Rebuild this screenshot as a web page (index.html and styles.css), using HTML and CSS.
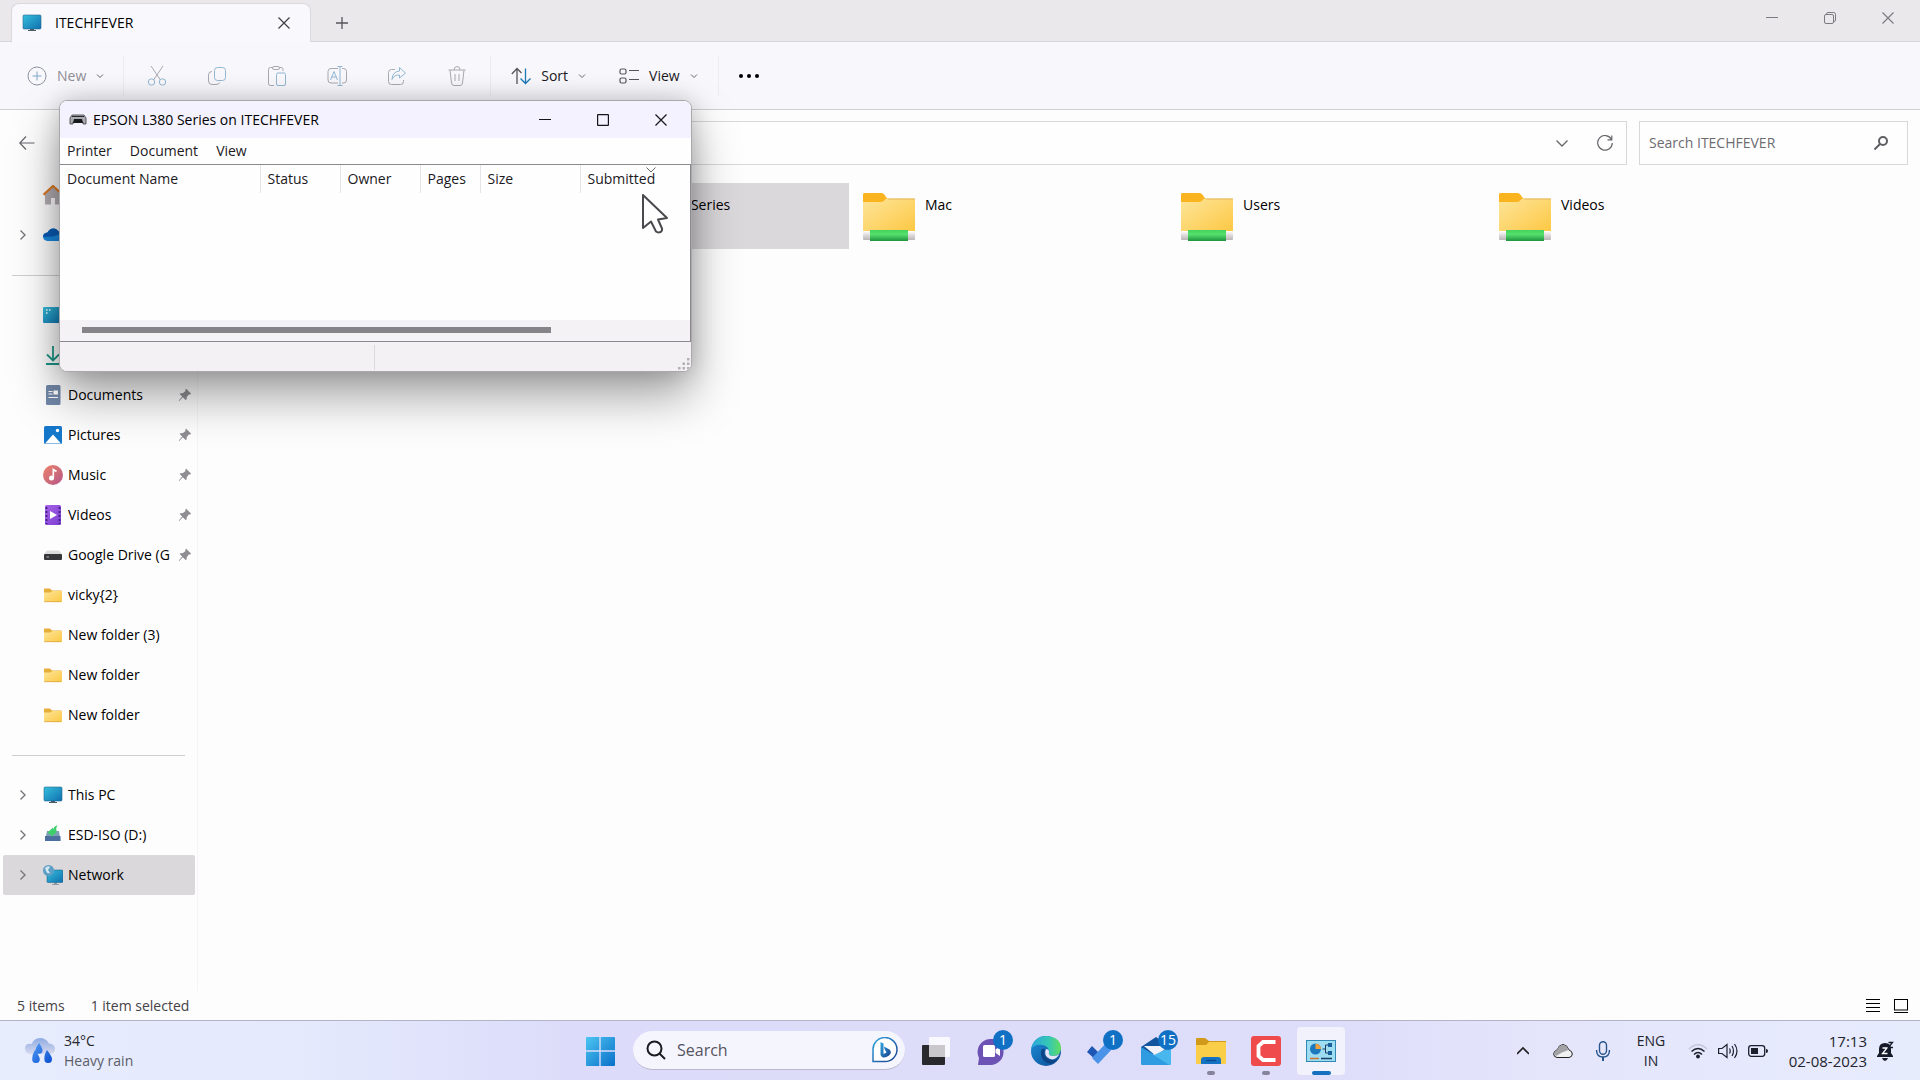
FILE: index.html
```html
<!DOCTYPE html>
<html lang="en">
<head>
<meta charset="utf-8">
<meta name="viewport" content="width=device-width, initial-scale=1">
<title>ITECHFEVER</title>
<link rel="stylesheet" href="styles.css">
</head>
<body>
<svg class="defs" aria-hidden="true">
  <defs>
    <linearGradient id="g-screen" x1="0" y1="0" x2="1" y2="1"><stop offset="0" stop-color="#35c0dd"/><stop offset="1" stop-color="#0f6fae"/></linearGradient>
    <linearGradient id="g-folder" x1="0" y1="0" x2="1" y2="1"><stop offset="0" stop-color="#fde59a"/><stop offset="1" stop-color="#fdc844"/></linearGradient>
    <linearGradient id="g-pipe" x1="0" y1="0" x2="0" y2="1"><stop offset="0" stop-color="#43d35c"/><stop offset=".4" stop-color="#55e06c"/><stop offset="1" stop-color="#1f9340"/></linearGradient>
    <linearGradient id="g-cap" x1="0" y1="0" x2="0" y2="1"><stop offset="0" stop-color="#f7f4f4"/><stop offset="1" stop-color="#b9b4b6"/></linearGradient>
    <linearGradient id="g-win" x1="0" y1="0" x2="1" y2="1"><stop offset="0" stop-color="#4cc5f2"/><stop offset="1" stop-color="#0a6fc8"/></linearGradient>
    <linearGradient id="g-music" x1="0" y1="0" x2="1" y2="1"><stop offset="0" stop-color="#ee8468"/><stop offset="1" stop-color="#b4568a"/></linearGradient>
    <linearGradient id="g-purple" x1="0" y1="0" x2="1" y2="1"><stop offset="0" stop-color="#a862e8"/><stop offset="1" stop-color="#7a3fd0"/></linearGradient>
    <linearGradient id="g-drop" x1="0" y1="0" x2="1" y2="1"><stop offset="0" stop-color="#4f9cf5"/><stop offset="1" stop-color="#0c4fd0"/></linearGradient>
    <linearGradient id="g-cloud" x1="0" y1="0" x2="0" y2="1"><stop offset="0" stop-color="#8fabe2"/><stop offset="1" stop-color="#d6d9ee"/></linearGradient>
    <linearGradient id="g-edge" x1="0" y1="0" x2="1" y2="0"><stop offset="0" stop-color="#2aa5dc"/><stop offset=".6" stop-color="#36c8b4"/><stop offset="1" stop-color="#62dd5c"/></linearGradient>
    <linearGradient id="g-edge2" x1="0" y1="0" x2="1" y2="1"><stop offset="0" stop-color="#1c8fd8"/><stop offset="1" stop-color="#0d4a94"/></linearGradient>
    <linearGradient id="g-bing" x1="0" y1="0" x2="1" y2="1"><stop offset="0" stop-color="#2fa6df"/><stop offset="1" stop-color="#1b3f8f"/></linearGradient>
    <symbol id="i-down" viewBox="0 0 8 8"><path d="M1 2.500 4 5.500 7 2.500" fill="none" stroke="currentColor" stroke-width="1"/></symbol>
    <symbol id="i-right" viewBox="0 0 8 12"><path d="M1.500 1.500 6 6 1.500 10.500" fill="none" stroke="currentColor" stroke-width="1.400"/></symbol>
    <symbol id="i-close" viewBox="0 0 12 12"><path d="M.5.5 11.500 11.500M11.500.5.5 11.500" fill="none" stroke="currentColor" stroke-width="1.200"/></symbol>
    <symbol id="i-min" viewBox="0 0 12 12"><path d="M0 5.500H12" stroke="currentColor"/></symbol>
    <symbol id="i-monitor" viewBox="0 0 20 20"><path d="M8 15h4v2h2v1H6v-1h2z" fill="#4b5b68"/><rect x="1" y="2" width="18" height="14" rx="1" fill="url(#g-screen)" stroke="#246a8f" stroke-width=".6"/></symbol>
    <symbol id="i-folder" viewBox="0 0 20 20"><path d="M1 4.500Q1 3.500 2 3.500H7L9 5.500H18Q19 5.500 19 6.500V10H1z" fill="#e6ae3a"/><path d="M1 7.500H7.500L9.500 6H19V16Q19 17 18 17H2Q1 17 1 16z" fill="url(#g-folder)"/><path d="M1.500 16.700H18.500" stroke="#d9a441" stroke-width=".8"/></symbol>
    <symbol id="i-pin" viewBox="0 0 14 14"><path d="M8.200.8 13.200 5.800 12 6.600 10.800 6.400 8.800 9 8.600 11.400 7.600 12 4.800 9.200 1.200 12.900.7 12.500 4.200 8.600 1.600 6 2.500 5.200 5 5 7.500 2.900 7.300 1.600z" fill="#8f8d91"/></symbol>
    <symbol id="i-netfolder" viewBox="0 0 54 50">
      <path d="M1 3Q1 1 3 1H19Q22 1 24 5L26 7H1z" fill="#fcb72b"/><path d="M1 3V12H19Q22 11 24 7Q22 1 19 1H3Q1 1 1 3" fill="#fab41f"/>
      <path d="M1 10H19Q21 10 23 8T27 6.500H52Q53 6.500 53 8V39H1z" fill="url(#g-folder)"/><path d="M26 7H53" stroke="#e3b860"/>
      <rect x="1" y="40" width="52" height="8" rx="1" fill="url(#g-cap)"/><rect x="8" y="38" width="38" height="11" fill="url(#g-pipe)"/>
    </symbol>
  </defs>
</svg>

<main class="explorer">
  <header class="titlebar">
    <div class="tab">
      <svg class="ico20"><use href="#i-monitor"/></svg>
      <span class="tab-name">ITECHFEVER</span>
      <button class="plain tab-close" aria-label="Close tab"><svg class="ico12"><use href="#i-close"/></svg></button>
    </div>
    <button class="plain tab-add" aria-label="New tab"><svg class="ico12" viewBox="0 0 12 12"><path d="M6 0V12M0 6H12" stroke="currentColor" stroke-width="1.300"/></svg></button>
    <div class="controls">
      <button class="plain" aria-label="Minimize"><svg class="ico12"><use href="#i-min"/></svg></button>
      <button class="plain" aria-label="Restore"><svg class="ico12" viewBox="0 0 12 12" fill="none" stroke="currentColor"><rect x=".5" y="2.500" width="9" height="9" rx="1.500"/><path d="M2.500 2.500V2Q2.500.5 4 .5H9.500Q11.500.5 11.500 2.500V8Q11.500 9.500 10 9.500"/></svg></button>
      <button class="plain" aria-label="Close"><svg class="ico12"><use href="#i-close"/></svg></button>
    </div>
  </header>

  <nav class="toolbar" aria-label="Commands">
    <button class="plain cmd faded"><svg class="ico20" viewBox="0 0 20 20" fill="none" stroke="#8b93a0"><circle cx="10" cy="10" r="9"/><path d="M10 5.500V14.500M5.500 10H14.500" stroke="#7fa6c6"/></svg><span>New</span><svg class="ico8"><use href="#i-down"/></svg></button>
    <i class="rule"></i>
    <div class="tools">
      <button class="plain" aria-label="Cut"><svg class="ico20" viewBox="0 0 20 20" fill="none"><path d="M4 0 13.500 14M16 0 6.500 14" stroke="#a8a8b0"/><circle cx="4.500" cy="16" r="3.200" stroke="#93b7d2"/><circle cx="15.500" cy="16" r="3.200" stroke="#93b7d2"/></svg></button>
      <button class="plain" aria-label="Copy"><svg class="ico20" viewBox="0 0 20 20" fill="none"><rect x="7.500" y="1.500" width="11" height="13" rx="3" stroke="#93b7d2"/><path d="M5 5.500Q1.500 5.500 1.500 9V15Q1.500 18.500 5 18.500H9Q12 18.500 12.500 16.500" stroke="#a8a8b0"/></svg></button>
      <button class="plain" aria-label="Paste"><svg class="ico20" viewBox="0 0 20 20" fill="none" stroke="#a8a8b0"><path d="M7 19.500H3.500Q1.500 19.500 1.500 17.500V3.500Q1.500 1.500 3.500 1.500H6M12 1.500H14Q16 1.500 16 3.500V5"/><rect x="5.500" y=".5" width="7" height="3" rx="1.500"/><rect x="9.500" y="7" width="9" height="12.500" rx="1.500" stroke="#93b7d2"/></svg></button>
      <button class="plain" aria-label="Rename"><svg class="ico20" viewBox="0 0 20 20" fill="none" stroke="#a8a8b0"><path d="M11 2.500H4Q1 2.500 1 5.500V14Q1 17 4 17H11M15 2.500H16.500Q19.500 2.500 19.500 5.500V14Q19.500 17 16.500 17H15"/><path d="M10.500.5H15.500M13 .5V19.500M10.500 19.500H15.500M3.500 14 7 5.500 10.500 14M4.700 11H9.300" stroke="#93b7d2"/></svg></button>
      <button class="plain" aria-label="Share"><svg class="ico20" viewBox="0 0 20 20" fill="none"><path d="M8 3.500H4.500Q1.500 3.500 1.500 6.500V15.500Q1.500 18.500 4.500 18.500H13.500Q16.500 18.500 16.500 15.500V14" stroke="#a8a8b0"/><path d="M12.500 1.500 18.500 7 12.500 12V9Q7.500 8.500 5 13.500Q5.500 5.500 12.500 5z" stroke="#93b7d2" stroke-linejoin="round"/></svg></button>
      <button class="plain" aria-label="Delete"><svg class="ico20" viewBox="0 0 20 20" fill="none" stroke="#a8a8b0"><path d="M1.500 4H18.500M7 4Q7 .5 10 .5T13 4M3 4 4.500 17Q4.800 19.500 7 19.500H13Q15.200 19.500 15.500 17L17 4M8 8V15M12 8V15"/></svg></button>
    </div>
    <i class="rule"></i>
    <button class="plain cmd"><svg class="ico20" viewBox="0 0 20 20" fill="none" stroke-width="1.300"><path d="M6 18V2.500M.8 8 6 2.500 10.500 7" stroke="#55565c"/><path d="M14.500 2.500V17.500M9.500 12.500 14.500 17.500 19.500 12.500" stroke="#1c78b8"/></svg><span>Sort</span><svg class="ico8"><use href="#i-down"/></svg></button>
    <button class="plain cmd view-cmd"><svg class="ico20" viewBox="0 0 20 20" fill="none" stroke="#55565c" stroke-width="1.200"><rect x="1" y="3" width="6" height="5" rx="1.500"/><rect x="1" y="12" width="6" height="5" rx="1.500"/><path d="M10 4.500H20M10 13.500H20"/></svg><span>View</span><svg class="ico8"><use href="#i-down"/></svg></button>
    <i class="rule rule-last"></i>
    <button class="plain more" aria-label="See more"><svg class="ico20" viewBox="0 0 20 20"><circle cx="2" cy="10" r="2"/><circle cx="10" cy="10" r="2"/><circle cx="18" cy="10" r="2"/></svg></button>
  </nav>

  <div class="location">
    <button class="plain back" aria-label="Back"><svg class="ico16" viewBox="0 0 16 16" fill="none" stroke="#66656a" stroke-width="1.200"><path d="M15.500 8H1M7 1.500.8 8 7 14.500"/></svg></button>
    <div class="address">
      <button class="plain" aria-label="Recent locations"><svg class="ico12" viewBox="0 0 12 12" fill="none" stroke="#66656a" stroke-width="1.300"><path d="M.5 3.500 6 9 11.500 3.500"/></svg></button>
      <button class="plain" aria-label="Refresh"><svg class="ico16" viewBox="0 0 16 16" fill="none" stroke="#66656a" stroke-width="1.200"><path d="M14.500 4.500A7.300 7.300 0 1 0 15.300 8M14.800.5V4.800H10.500"/></svg></button>
    </div>
    <label class="find">
      <input type="text" placeholder="Search ITECHFEVER" aria-label="Search ITECHFEVER">
      <svg class="ico16" viewBox="0 0 16 16" fill="none" stroke="#5f5e62"><circle cx="10" cy="6" r="4" stroke-width="2"/><path d="M7 9 1.500 14.500" stroke-width="2"/></svg>
    </label>
  </div>

  <div class="body">
    <aside class="sidebar">
      <a class="row" href="#" aria-label="Home"><i class="twist"></i><svg class="ico20" viewBox="0 0 20 20"><path d="M2 9V19.500H8V13H12V19.500H18V9L10 2z" fill="#b3aeb3"/><path d="M.5 9.800 10 1 19.500 9.800" fill="none" stroke="#dd7a22" stroke-width="2.200"/></svg></a>
      <a class="row" href="#" aria-label="OneDrive"><i class="twist"><svg><use href="#i-right"/></svg></i><svg class="ico20" viewBox="0 0 20 20"><path d="M4 16Q0 15 0 11.500T4.500 7.500Q7 3 11 3.500T17 9Q20 10 20 13T17 16z" fill="#1b8ae0"/><path d="M4.500 7.500Q7 3 11 3.500T17 9L10 11.500 0 12Q0 8 4.500 7.500" fill="#0b5cb5"/></svg></a>
      <hr>
      <a class="row" href="#" aria-label="Desktop"><i class="twist"></i><svg class="ico20" viewBox="0 0 20 20"><rect x="0" y="2" width="20" height="16" rx="1" fill="url(#g-screen)"/><path d="M3 5h1.500M3 8h1.500M6 5h1.500" stroke="#fff" stroke-width="1.500"/></svg></a>
      <a class="row" href="#" aria-label="Downloads"><i class="twist"></i><svg class="ico20" viewBox="0 0 20 20" fill="none" stroke="#1d9688" stroke-width="1.800"><path d="M10 1V15M4 9.500 10 15.500 16 9.500M3 19H17"/></svg></a>
      <a class="row" href="#"><i class="twist"></i><svg class="ico20" viewBox="0 0 20 20"><rect x="3" y="0" width="14.500" height="20" rx="1.500" fill="#7288a8"/><path d="M5.500 6.500h4M5.500 9h4M5.500 12.500h9.500" stroke="#fff"/><rect x="10.500" y="5.500" width="4.500" height="4" fill="#fff"/></svg><span>Documents</span><svg class="pin"><use href="#i-pin"/></svg></a>
      <a class="row" href="#"><i class="twist"></i><svg class="ico20" viewBox="0 0 20 20"><rect x="1" y="1" width="18" height="18" rx="1.500" fill="#1578cb"/><path d="M2 18.500 10 9.500 18 18.500z" fill="#fff"/><circle cx="14.500" cy="5.500" r="1.700" fill="#fff"/></svg><span>Pictures</span><svg class="pin"><use href="#i-pin"/></svg></a>
      <a class="row" href="#"><i class="twist"></i><svg class="ico20" viewBox="0 0 20 20"><circle cx="10" cy="10" r="10" fill="url(#g-music)"/><circle cx="8.500" cy="13" r="2.500" fill="#fff"/><path d="M10.300 13V4.500L13.500 6.500" fill="none" stroke="#fff" stroke-width="1.600"/></svg><span>Music</span><svg class="pin"><use href="#i-pin"/></svg></a>
      <a class="row" href="#"><i class="twist"></i><svg class="ico20" viewBox="0 0 20 20"><rect x="2" y="0" width="16" height="20" rx="1.500" fill="url(#g-purple)"/><path d="M3.500 2V19M16.500 2V19" stroke="#3f1d85" stroke-width="1.800" stroke-dasharray="2 2"/><path d="M7 6 14 10 7 14z" fill="#fff"/></svg><span>Videos</span><svg class="pin"><use href="#i-pin"/></svg></a>
      <a class="row" href="#"><i class="twist"></i><svg class="ico20" viewBox="0 0 20 20"><path d="M4 5.500H16L19 9H1z" fill="#dcdcdd"/><rect x="1" y="9" width="18" height="6" rx="1" fill="#36373a"/><path d="M3.500 12H6" stroke="#bbb"/></svg><span>Google Drive (G</span><svg class="pin"><use href="#i-pin"/></svg></a>
      <a class="row" href="#"><i class="twist"></i><svg class="ico20"><use href="#i-folder"/></svg><span>vicky{2}</span></a>
      <a class="row" href="#"><i class="twist"></i><svg class="ico20"><use href="#i-folder"/></svg><span>New folder (3)</span></a>
      <a class="row" href="#"><i class="twist"></i><svg class="ico20"><use href="#i-folder"/></svg><span>New folder</span></a>
      <a class="row" href="#"><i class="twist"></i><svg class="ico20"><use href="#i-folder"/></svg><span>New folder</span></a>
      <hr>
      <a class="row" href="#"><i class="twist"><svg><use href="#i-right"/></svg></i><svg class="ico20"><use href="#i-monitor"/></svg><span>This PC</span></a>
      <a class="row" href="#"><i class="twist"><svg><use href="#i-right"/></svg></i><svg class="ico20" viewBox="0 0 20 20"><path d="M4 6H16L17.500 16H2z" fill="#7f9fb4"/><path d="M2 11H17.500V16H2z" fill="#4d6fa0"/><path d="M4.500 7.500 10 2.500V5Q10.500 1.500 14.500 0 12.500 3 13.500 6 13.500 9 10 9.500V12z" fill="#3fce6c"/></svg><span>ESD-ISO (D:)</span></a>
      <a class="row selected" href="#"><i class="twist"><svg><use href="#i-right"/></svg></i><svg class="ico20" viewBox="0 0 20 20"><path d="M11 17h3v2h2v1H9v-1h2z" fill="#8f9ba4"/><rect x="4" y="5" width="16" height="12.500" rx="1" fill="url(#g-screen)" stroke="#246a8f" stroke-width=".6"/><circle cx="5.500" cy="5.500" r="5.500" fill="#5d9fc4"/><path d="M2 3Q5 0 7 2L5 5 7 8Q4 9 3 6z" fill="#d5e8f2"/></svg><span>Network</span></a>
    </aside>
    <section class="files">
      <a class="tile" href="#" aria-label="Shared folder"><svg><use href="#i-netfolder"/></svg></a>
      <a class="tile active" href="#"><svg viewBox="0 0 54 50"><rect x="6" y="14" width="42" height="24" rx="3" fill="#6d7278"/></svg><span>EPSON L380 Series</span></a>
      <a class="tile" href="#"><svg><use href="#i-netfolder"/></svg><span>Mac</span></a>
      <a class="tile" href="#"><svg><use href="#i-netfolder"/></svg><span>Users</span></a>
      <a class="tile" href="#"><svg><use href="#i-netfolder"/></svg><span>Videos</span></a>
    </section>
  </div>

  <footer class="status">
    <span>5 items</span><span>1 item selected</span>
    <div class="modes">
      <button class="plain" aria-label="Details view"><svg viewBox="0 0 14 14" stroke="#000"><path d="M0 .5H14M0 4.500H14M0 8.500H14M0 12.500H14"/></svg></button>
      <button class="plain" aria-label="Large icons view"><svg viewBox="0 0 14 14" fill="none" stroke="#000"><rect x=".5" y=".5" width="13" height="10.500"/><path d="M0 13.500H14"/></svg></button>
    </div>
  </footer>
</main>

<footer class="taskbar">
  <button class="plain weather">
    <svg viewBox="0 0 30 28"><path d="M7 17Q0 17 0 11.500T6.500 7Q9 1 15 1T24 6.500Q30 7 30 12T24 17z" fill="url(#g-cloud)"/><path d="M14 6Q18 12 17.500 13.500A3.500 3.500 0 0 1 10.500 13Q11 10 14 6M10 13Q15 20 14.800 22.500A3.800 3.800 0 0 1 7.200 22Q7 18 10 13M22 13Q27.500 20 27 22.500A3.800 3.800 0 0 1 19.400 22Q19 18 22 13" fill="url(#g-drop)"/></svg>
    <span class="two-line"><span class="dark">34°C</span><span>Heavy rain</span></span>
  </button>

  <div class="apps">
    <button class="plain app" aria-label="Start"><svg viewBox="0 0 30 30"><path d="M1 2Q1 1 2 1H14.300V14.300H1zM15.700 1H29Q30 1 30 2V14.300H15.700zM1 15.700H14.300V30H2Q1 30 1 29zM15.700 15.700H30V29Q30 30 29 30H15.700z" fill="url(#g-win)"/></svg></button>
    <label class="searchbox">
      <svg class="ico20" viewBox="0 0 20 20" fill="none" stroke="#1c1b1f" stroke-width="2"><circle cx="8.500" cy="8.500" r="7"/><path d="M13.500 13.500 19 19"/></svg>
      <input type="text" placeholder="Search" aria-label="Search">
      <svg class="bing" viewBox="0 0 26 26"><path d="M1 24.500V13A12 12 0 1 1 13 24.500z" fill="#fff" stroke="url(#g-bing)" stroke-width="1.500"/><path d="M8.500 5 11.500 6.500V17L14.500 15.500 12.500 12 12 9.500 17.500 12.500Q20.500 15.500 17 18.500 13 21.500 10 20L8.500 18z" fill="url(#g-bing)"/></svg>
    </label>
    <button class="plain app" aria-label="Task view"><svg viewBox="0 0 30 30"><rect x="1" y="9" width="23" height="20" rx="1" fill="#29282c"/><rect x="8" y="1" width="21" height="20" rx="1" fill="#fff" opacity=".8"/><rect x="8" y="9" width="16" height="12" fill="#c9c7cb"/></svg></button>
    <button class="plain app" aria-label="Chat, 1 new"><svg viewBox="0 0 30 30"><path d="M2 29 3 22A13 13 0 1 1 14 29z" fill="#6c52b4"/><rect x="7" y="9" width="12" height="12" rx="1.500" fill="#fff"/><path d="M19.500 13.500 24 10.500V20L19.500 17z" fill="#fff"/></svg><b class="badge">1</b></button>
    <button class="plain app" aria-label="Edge"><svg viewBox="0 0 30 30"><circle cx="15" cy="15" r="15" fill="url(#g-edge2)"/><path d="M0 13Q3 0 15.500 0 30 1 30 13 29 20 22 20 17 20 18 16 18 10 11 9 4 8 0 13" fill="url(#g-edge)"/><path d="M18 16Q17 20 22 20 27 20 29 17 25 25 19 23 12 20 15 13 18 13 18 16" fill="#e4e3f8"/><path d="M10 15Q9 26 20 28Q24 27 27 23 21 26 16 22 12 18 14 13 11 12 10 15" fill="#0c4585"/></svg></button>
    <button class="plain app" aria-label="To Do, 1 new"><svg viewBox="0 0 30 30"><path d="M1 16 6 10 12 16 10 24z" fill="#1e56b4"/><path d="M6 22 22 5 28 11 12 28z" fill="#4a93e8"/></svg><b class="badge">1</b></button>
    <button class="plain app" aria-label="Mail, 15 new"><svg viewBox="0 0 30 30"><path d="M0 11 15 1 30 11V18H0z" fill="#13569e"/><path d="M3 10H28L15 20z" fill="#f1f2fa"/><path d="M0 11 30 29H1Q0 29 0 28z" fill="#2f9be0"/><path d="M30 11V28Q30 29 29 29H28L13 19z" fill="#47b7ee"/></svg><b class="badge">15</b></button>
    <button class="plain app running" aria-label="File Explorer"><svg viewBox="0 0 30 30"><path d="M0 3Q0 2 1 2H9L13 5H30V12H0z" fill="#d19a1b"/><path d="M0 9H10L13 6H29Q30 6 30 7V27Q30 28 29 28H1Q0 28 0 27z" fill="#fbce4a"/><path d="M5 28V24Q5 21 8 21H22Q25 21 25 24V28z" fill="#1673c4"/><path d="M10 24.500H20" stroke="#0b4c92" stroke-width="1.500"/></svg></button>
    <button class="plain app running" aria-label="Camtasia"><svg viewBox="0 0 30 30"><rect width="30" height="30" rx="3" fill="#ef4b4c"/><path d="M24.500 6H12L7.500 10V20L12 24H24.500" fill="none" stroke="#fff" stroke-width="3.800"/></svg></button>
    <button class="plain app current" aria-label="Devices and Printers"><svg viewBox="0 0 30 30"><rect x=".5" y="4.500" width="29" height="21" fill="#9edcf2" stroke="#3188b4"/><circle cx="9.500" cy="13" r="5.500" fill="#1d79bd"/><path d="M9.500 13V7.500A5.500 5.500 0 0 1 15 13z" fill="#f3a03c"/><path d="M16.500 13H19.500M19.500 9V17M19.500 9H22M19.500 17H22" stroke="#1b3f66" fill="none"/><path d="M22 7h4v4h-4zM22 15h4v4h-4z" fill="#17609a"/><path d="M4 22.500H13" stroke="#c9772a" stroke-width="1.500"/><path d="M15 22.500H26" stroke="#1b3f66" stroke-width="1.500"/></svg></button>
  </div>

  <div class="tray">
    <button class="plain t40" aria-label="Hidden icons"><svg class="ico12" viewBox="0 0 12 12" fill="none" stroke="#222" stroke-width="1.600"><path d="M0 9 6 3 12 9"/></svg></button>
    <button class="plain t40" aria-label="OneDrive"><svg class="ico20" viewBox="0 0 20 20"><path d="M4 16.500Q.7 16 .7 13T4 9Q6 3.500 10 3.500T16 9Q19.300 10 19.300 13T16 16.500z" fill="#f2f1f2" stroke="#222"/><path d="M1.500 13Q1 10 4 9 6 4 10 4T15.500 9L9 11.500 3 15z" fill="#a3a2a5"/></svg></button>
    <button class="plain t40" aria-label="Microphone"><svg class="ico20" viewBox="0 0 20 20" fill="none" stroke="#28568c" stroke-width="1.400"><rect x="6.500" y=".8" width="7" height="12.500" rx="3.500"/><path d="M3.500 9Q3.500 16 10 16T16.500 9"/><path d="M10 16V20" stroke-width="2"/></svg></button>
    <button class="plain two-line lang"><span>ENG</span><span>IN</span></button>
    <button class="plain quick" aria-label="Network, sound and battery">
      <svg class="ico20" viewBox="0 0 20 20" fill="none" stroke="#1c1f2c" stroke-width="1.500"><path d="M1 8Q10-.5 19 8" stroke="#c3c7d8"/><path d="M3.500 10.500Q10 4.500 16.500 10.500M6 13.500Q10 9.500 14 13.500"/><circle cx="10" cy="15.500" r="1.200" fill="#1c1f2c"/></svg>
      <svg class="ico20" viewBox="0 0 20 20" fill="none" stroke="#1c1f2c" stroke-width="1.200"><path d="M.6 7.500H4L9 3.500V16.500L4 12.500H.6z"/><path d="M11.500 7.500Q13 10 11.500 12.500M14 5Q17 10 14 15M16.500 3Q21.500 10 16.500 17"/></svg>
      <svg class="ico20" viewBox="0 0 20 20"><rect x=".7" y="4.700" width="16" height="10.600" rx="2.500" fill="none" stroke="#1c1f2c" stroke-width="1.300"/><rect x="3" y="7" width="7" height="6" fill="#1c1f2c"/><path d="M18 8Q20 8 20 10T18 12z" fill="#1c1f2c"/></svg>
    </button>
    <button class="plain two-line clock"><span>17:13</span><span>02-08-2023</span></button>
    <button class="plain bell" aria-label="Notifications"><svg class="ico20" viewBox="0 0 20 20"><path d="M1 15 3 12V8Q3 2 9 2T15 8V12L17 15V16H1zM6 17H12Q11 20 9 20T6 17" fill="#161a28"/><path d="M6.500 7H11L6.500 12.500H11.500" fill="none" stroke="#fff" stroke-width="1.300"/><path d="M12.500 1.500H16.500L12.500 6.500H17" fill="none" stroke="#161a28" stroke-width="1.300"/></svg></button>
  </div>
</footer>

<section class="queue" aria-label="Print queue">
  <header class="queue-title">
    <svg viewBox="0 0 18 12"><path d="M3 1H15L17 4V10H14V8H4V10H1V4z" fill="#a9abb0" stroke="#3c3e42" stroke-width=".8"/><path d="M3 2.500H15" stroke="#2b2c30"/><path d="M5 5H13L14 9H4z" fill="#17181b"/></svg>
    <span>EPSON L380 Series on ITECHFEVER</span>
    <div class="controls">
      <button class="plain" aria-label="Minimize"><svg class="ico12"><use href="#i-min"/></svg></button>
      <button class="plain" aria-label="Maximize"><svg class="ico12" viewBox="0 0 12 12"><rect x=".6" y=".6" width="10.800" height="10.800" rx=".5" fill="none" stroke="currentColor" stroke-width="1.200"/></svg></button>
      <button class="plain" aria-label="Close"><svg class="ico12"><use href="#i-close"/></svg></button>
    </div>
  </header>
  <nav class="menu"><button class="plain">Printer</button><button class="plain">Document</button><button class="plain">View</button></nav>
  <div class="list">
    <table>
      <colgroup><col class="c-name"><col class="c-mid"><col class="c-mid"><col class="c-pages"><col class="c-size"><col></colgroup>
      <thead><tr><th>Document Name</th><th>Status</th><th>Owner</th><th>Pages</th><th>Size</th><th class="sorted">Submitted<svg class="sort-mark" viewBox="0 0 10 6"><path d="M.5.5 5 5 9.500.5" fill="none" stroke="#666"/></svg></th></tr></thead>
    </table>
    <div class="track"><div class="thumb"></div></div>
  </div>
  <footer class="queue-status"><span></span><svg viewBox="0 0 12 12" fill="#b3b1b4"><path d="M9 0h2.500v2.500H9zM9 4.500h2.500V7H9zM9 9h2.500v2.500H9zM4.500 4.500H7V7H4.500zM4.500 9H7v2.500H4.500zM0 9h2.500v2.500H0z"/></svg></footer>
</section>

<svg class="pointer" viewBox="0 0 28 42" aria-hidden="true"><path d="M2 2V35L10 28.500 15 38.500Q17 40 19.500 39 21.500 38 21 35.500L17 26.500 26 25z" fill="#fff" stroke="#4a494d" stroke-width="2" stroke-linejoin="round"/></svg>
</body>
</html>
```
FILE: styles.css
```css
* { box-sizing: border-box; }

body {
  margin: 0;
  min-height: 100vh;
  display: flex;
  flex-direction: column;
  position: relative;
  background: #fefdfe;
  color: #1b1a1d;
  font: 14px/20px "Open Sans", "Noto Sans", sans-serif;
}

.defs { position: absolute; width: 0; height: 0; }
svg { display: block; flex: none; }

.plain {
  display: flex;
  align-items: center;
  justify-content: center;
  margin: 0;
  padding: 0;
  border: 0;
  background: none;
  color: inherit;
  font: inherit;
}

.ico8 { width: 8px; height: 8px; }
.ico12 { width: 12px; height: 12px; }
.ico16 { width: 16px; height: 16px; }
.ico20 { width: 20px; height: 20px; }

a { color: inherit; text-decoration: none; }
input { font: inherit; border: 0; background: none; outline: 0; padding: 0; min-width: 0; flex: 1; }
input::placeholder { color: #6d6b70; opacity: 1; }

/* Explorer window */
.explorer { flex: 1; display: flex; flex-direction: column; }

.titlebar {
  display: flex;
  height: 42px;
  padding: 0 3px 0 11px;
  background: #eae8eb;
  border-bottom: 1px solid #d8d6da;
}
.tab {
  display: flex;
  align-items: center;
  width: 300px;
  height: 39px;
  margin: 3px 0 -1px;
  padding: 0 14px 0 10px;
  border: 1px solid #dbd9de;
  border-bottom: 0;
  border-radius: 8px 8px 0 0;
  background: #f9f8fd;
}
.tab-name { flex: 1; margin-left: 13px; font-weight: 500; color: #000; }
.tab-close { width: 24px; height: 24px; color: #3f3e42; }
.tab-add { width: 40px; margin: 4px 0 0 11px; color: #55545a; }
.controls { display: flex; margin-left: auto; }
.controls .plain { width: 58px; height: 36px; color: #7d7b80; }

.toolbar {
  display: flex;
  align-items: center;
  height: 68px;
  padding-left: 27px;
  background: #f8f7fc;
  border-bottom: 1px solid #d0ced5;
}
.cmd { height: 36px; gap: 10px; }
.cmd .ico8 { color: #66656a; }
.faded { color: #918f96; }
.rule { width: 1px; height: 40px; background: #eeecf2; }
.faded + .rule { margin-left: 19px; }
.tools { display: flex; margin: 0 3px; }
.tools .plain { width: 60px; height: 36px; }
.tools + .rule { margin-right: 20px; }
.view-cmd { margin-left: 33px; }
.rule-last { margin: 0 20px; }
.more { height: 36px; }

.location {
  display: flex;
  align-items: center;
  gap: 12px;
  height: 65px;
  padding: 0 12px 0 19px;
}
.back { width: 40px; height: 40px; justify-content: flex-start; }
.address, .find {
  display: flex;
  align-items: center;
  height: 44px;
  border: 1px solid #d9d7db;
  background: #fffeff;
}
.address { flex: 1; justify-content: flex-end; }
.address .plain { width: 43px; height: 42px; }
.find { width: 269px; padding: 0 18px 0 9px; }

.body { flex: 1; display: flex; }
.sidebar { width: 198px; border-right: 1px solid #f6f4f7; }
.sidebar hr { height: 1px; margin: 20px 12px 19px; border: 0; background: #cfcdd1; }
.row {
  display: flex;
  align-items: center;
  height: 40px;
  margin: 0 2px 0 3px;
  padding: 0 3px 0 16px;
  white-space: nowrap;
  border-radius: 2px;
  color: #000;
}
.twist { width: 24px; color: #77757a; }
.twist svg { width: 8px; height: 12px; }
.row span { margin-left: 5px; }
.pin { width: 14px; height: 14px; margin-left: auto; }
.selected { background: #dbd8db; }

.files {
  flex: 1;
  display: grid;
  grid-template-columns: repeat(auto-fill, 314px);
  grid-auto-rows: 66px;
  gap: 4px;
  align-content: start;
  padding: 8px 19px;
}
.tile { display: flex; align-items: flex-start; gap: 9px; padding: 9px; color: #000; }
.tile svg { width: 54px; height: 50px; }
.tile span { margin-top: 3px; }
.active { background: #dbd8dc; }

.status {
  display: flex;
  align-items: center;
  gap: 26px;
  height: 29px;
  padding: 0 12px 0 17px;
  color: #444247;
}
.modes { display: flex; gap: 14px; margin-left: auto; }
.modes svg { width: 14px; height: 14px; }

/* Taskbar */
.taskbar {
  display: grid;
  grid-template-columns: 1fr auto 1fr;
  height: 60px;
  border-top: 1px solid #b4b3c6;
  background: linear-gradient(90deg, #e7edfd 0, #e4e9fc 16%, #dcdcfa 30%, #dedefa 70%, #e4e5fb 80%, #e7ecfd 100%);
}
.two-line { display: flex; flex-direction: column; line-height: 20px; }
.weather { justify-content: flex-start; gap: 9px; padding-left: 25px; text-align: left; color: #5c5d69; }
.weather svg { width: 30px; height: 28px; }
.dark { color: #26262c; }

.apps { display: flex; align-items: center; }
.app { position: relative; width: 55px; height: 58px; }
.app > svg { width: 30px; height: 30px; }
.badge {
  position: absolute;
  top: 8px;
  right: 5px;
  min-width: 20px;
  height: 20px;
  border-radius: 10px;
  background: #1070c4;
  color: #fff;
  font-weight: 400;
  line-height: 20px;
}
.running::after, .current::after {
  content: "";
  position: absolute;
  bottom: 5px;
  width: 8px;
  height: 4px;
  border-radius: 2px;
  background: #85849a;
}
.current { width: 48px; height: 48px; margin: 0 3px 0 4px; border-radius: 4px; background: #f2f2fd; }
.current::after { bottom: 0; width: 19px; background: #1670c0; }
.searchbox {
  display: flex;
  align-items: center;
  gap: 11px;
  width: 272px;
  height: 39px;
  margin: 0 3px 0 6px;
  padding: 0 7px 0 13px;
  border-radius: 20px;
  background: #f5f5fe;
  border-bottom: 1px solid #b9b8cf;
  font-size: 16px;
}
.searchbox input::placeholder { color: #55545f; }
.bing { width: 26px; height: 26px; }

.tray { display: flex; justify-content: flex-end; align-items: center; padding-right: 24px; color: #23242d; }
.tray .plain { height: 58px; }
.t40 { width: 40px; }
.lang { width: 56px; align-items: center; }
.quick { width: 90px; gap: 10px; margin-left: 4px; }
.clock { width: 88px; align-items: flex-end; margin: 0 9px 0 6px; font-size: 15px; }

/* Print queue window */
.queue {
  position: absolute;
  top: 100px;
  left: 59px;
  width: 633px;
  border: 1px solid #aaa8ad;
  border-radius: 8px;
  overflow: hidden;
  background: #fffeff;
  box-shadow: 0 24px 48px rgba(0, 0, 0, .36), 0 0 24px rgba(0, 0, 0, .18);
}
.queue-title { display: flex; align-items: center; height: 37px; padding: 0 1px 0 9px; background: #f3f2fe; color: #000; }
.queue-title > svg { width: 18px; height: 12px; margin-right: 6px; }
.queue .controls .plain { color: #151418; }
.menu { display: flex; gap: 18px; height: 26px; padding: 0 7px; }
.list { height: 178px; display: flex; flex-direction: column; border: 1px solid #8b898d; border-width: 1px 1px 1px 0; }
table { width: 100%; table-layout: fixed; border-collapse: collapse; }
th { height: 28px; padding: 0 7px; text-align: left; font-weight: 400; border-right: 1px solid #e6e4e8; white-space: nowrap; }
th:last-child { border: 0; }
.c-name { width: 200px; }
.c-mid { width: 80px; }
.c-pages { width: 60px; }
.c-size { width: 100px; }
.sorted { position: relative; }
.sort-mark { position: absolute; top: 2px; left: 65px; width: 10px; height: 6px; }
.track { margin-top: auto; height: 21px; padding: 7px 22px; background: #f4f2f5; }
.thumb { width: 80%; height: 6px; background: #868488; }
.queue-status { display: flex; align-items: flex-end; justify-content: space-between; height: 29px; padding: 0 1px 1px 0; background: #f3f1f4; }
.queue-status span { width: 315px; height: 25px; border-right: 1px solid #dad8db; }
.queue-status svg { width: 12px; height: 12px; }

.pointer { position: absolute; top: 193px; left: 641px; width: 28px; height: 42px; }
```
